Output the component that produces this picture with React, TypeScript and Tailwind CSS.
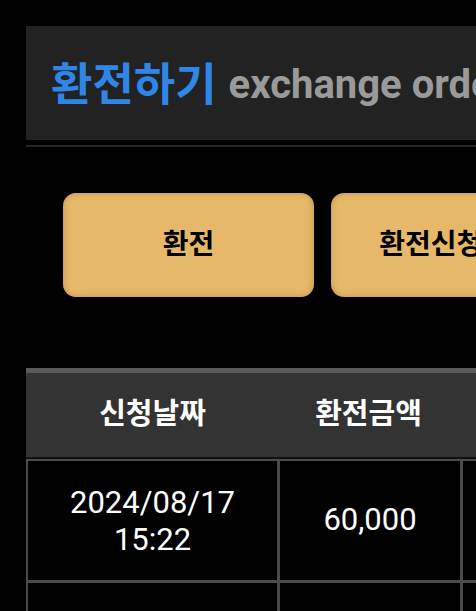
import React from "react";

const font = { fontFamily: 'Roboto, "Noto Sans CJK KR", "Noto Sans", sans-serif' };

export default function App() {
  const rows = [
    { date: "2024/08/17", time: "15:22", amount: "60,000", status: "완료" },
    { date: "2024/08/16", time: "12:10", amount: "50,000", status: "완료" },
  ];
  return (
    <div className="w-[476px] h-[611px] overflow-hidden bg-black" style={font}>
      <div className="w-[760px] pl-[26px] pt-[26px]">
        <div className="h-[114px] bg-[#222222] flex items-center pl-[25px] whitespace-nowrap">
          <span className="text-[45px] font-bold text-[#2f86e6] leading-none translate-y-[2px]">환전하기</span>
          <span className="ml-[12px] text-[40px] font-bold text-[#9a9a9a] leading-none translate-y-[2px]">exchange order</span>
        </div>
        <div className="mt-[5px] h-[2px] bg-[#242424]" />
        <div className="mt-[46px] pl-[37px] flex gap-[17px]">
          <button className="w-[251px] h-[104px] rounded-[13px] bg-[#e5b86a] text-black text-[28px] font-bold shadow-[inset_0_0_6px_rgba(120,80,20,0.35)]">
            환전
          </button>
          <button className="w-[251px] h-[104px] rounded-[13px] bg-[#e5b86a] text-black text-[28px] font-bold shadow-[inset_0_0_6px_rgba(120,80,20,0.35)]">
            환전신청내역
          </button>
        </div>
        <div className="mt-[71px]">
          <div className="border-t-[5px] border-[#5a5a5a] bg-[#333333] h-[89px] grid grid-cols-[251px_183px_183px] text-white text-[29px] font-bold">
            <div className="flex items-center justify-center pl-[2px]">신청날짜</div>
            <div className="flex items-center justify-center">환전금액</div>
            <div className="flex items-center justify-center">상태</div>
          </div>
          <div className="h-[2px] bg-[#111111]" />
          <div className="grid grid-cols-[249px_180px_180px] gap-[3px] bg-[#4a4a4a] pl-[2px] pt-[2px] w-[620px]">
            {rows.map((r, i) => (
              <React.Fragment key={i}>
                <div className="bg-black h-[119px] flex flex-col items-center justify-center text-white text-[31px] leading-[37px]">
                  <span>{r.date}</span>
                  <span>{r.time}</span>
                </div>
                <div className="bg-black h-[119px] flex items-center justify-center text-white text-[31px]">
                  {r.amount}
                </div>
                <div className="bg-black h-[119px] flex items-center justify-center text-white text-[31px]">
                  {r.status}
                </div>
              </React.Fragment>
            ))}
          </div>
        </div>
      </div>
    </div>
  );
}
